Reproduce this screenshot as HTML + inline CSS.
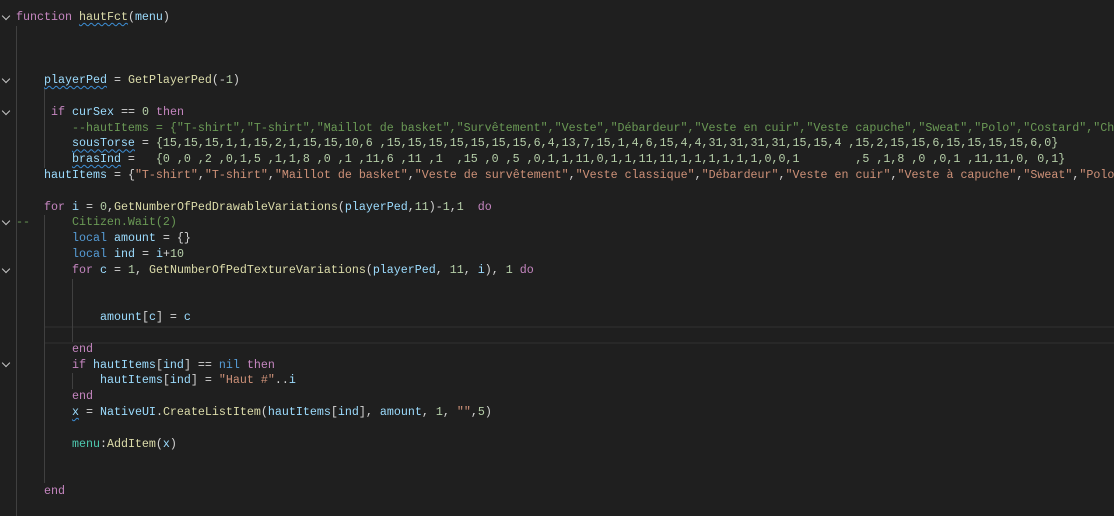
<!DOCTYPE html>
<html><head><meta charset="utf-8"><style>
body{margin:0;width:1114px;height:514px;background:#1f1f1f;overflow:hidden;position:relative;font-family:"Liberation Mono",monospace;font-size:11.67px;color:#d4d4d4}
#w{position:absolute;left:0;top:2px;width:1114px;height:514px}
.l{position:absolute;left:16px;height:15.8px;line-height:15.8px;white-space:pre;}
.k{color:#c586c0}.f{color:#dcdcaa}.v{color:#9cdcfe}.n{color:#b5cea8}.s{color:#ce9178}.c{color:#6a9955}.b{color:#569cd6}.t{color:#4ec9b0}
.w{text-decoration:underline wavy #3d8fd6;text-decoration-thickness:1px;text-underline-offset:2px}
.g{position:absolute;width:1px;background:#404040}
.ch{position:absolute;left:3px;width:5px;height:5px;border-right:1px solid #c5c5c5;border-bottom:1px solid #c5c5c5;transform:rotate(45deg)}
.cur{position:absolute;left:44px;right:0;height:14px;border-top:2px solid #282828;border-bottom:2px solid #282828}
</style></head><body><div id="w">
<div class="cur" style="top:324px"></div>
<div class="g" style="left:16px;top:24px;height:490px"></div>
<div class="g" style="left:44px;top:87px;height:79px"></div>
<div class="g" style="left:44px;top:213px;height:268px"></div>
<div class="g" style="left:72px;top:277px;height:63px"></div>
<div class="g" style="left:72px;top:371px;height:16px"></div>

<div class="ch" style="top:11px"></div>
<div class="ch" style="top:74px"></div>
<div class="ch" style="top:106px"></div>
<div class="ch" style="top:216px"></div>
<div class="ch" style="top:264px"></div>
<div class="ch" style="top:358px"></div>

<div class="l" style="top:8px"><span class="k">function</span> <span class="f w">hautFct</span>(<span class="v">menu</span>)</div>
<div class="l" style="top:71.2px">    <span class="v w">playerPed</span> = <span class="f">GetPlayerPed</span>(-<span class="n">1</span>)</div>
<div class="l" style="top:102.8px">     <span class="k">if</span> <span class="v">curSex</span> == <span class="n">0</span> <span class="k">then</span></div>
<div class="l c" style="top:118.6px">        --hautItems = {"T-shirt","T-shirt","Maillot de basket","Survêtement","Veste","Débardeur","Veste en cuir","Veste capuche","Sweat","Polo","Costard","Chemise"}</div>
<div class="l n" style="top:134.4px">        <span class="v w">sousTorse</span><span style="color:#d4d4d4"> = </span>{15,15,15,1,1,15,2,1,15,15,10,6 ,15,15,15,15,15,15,15,6,4,13,7,15,1,4,6,15,4,4,31,31,31,31,15,15,4 ,15,2,15,15,6,15,15,15,15,6,0}</div>
<div class="l n" style="top:150.2px">        <span class="v w">brasInd</span><span style="color:#d4d4d4"> =   </span>{0 ,0 ,2 ,0,1,5 ,1,1,8 ,0 ,1 ,11,6 ,11 ,1  ,15 ,0 ,5 ,0,1,1,11,0,1,1,11,11,1,1,1,1,1,1,0,0,1        ,5 ,1,8 ,0 ,0,1 ,11,11,0, 0,1}</div>
<div class="l" style="top:166px">    <span class="v">hautItems</span> = {<span class="s">"T-shirt"</span>,<span class="s">"T-shirt"</span>,<span class="s">"Maillot de basket"</span>,<span class="s">"Veste de survêtement"</span>,<span class="s">"Veste classique"</span>,<span class="s">"Débardeur"</span>,<span class="s">"Veste en cuir"</span>,<span class="s">"Veste à capuche"</span>,<span class="s">"Sweat"</span>,<span class="s">"Polo"</span>}</div>
<div class="l" style="top:197.6px">    <span class="k">for</span> <span class="v">i</span> = <span class="n">0</span>,<span class="f">GetNumberOfPedDrawableVariations</span>(<span class="v">playerPed</span>,<span class="n">11</span>)-<span class="n">1</span>,<span class="n">1</span>  <span class="k">do</span></div>
<div class="l c" style="top:213.4px">--      Citizen.Wait(2)</div>
<div class="l" style="top:229.2px">        <span class="b">local</span> <span class="v">amount</span> = {}</div>
<div class="l" style="top:245px">        <span class="b">local</span> <span class="v">ind</span> = <span class="v">i</span>+<span class="n">10</span></div>
<div class="l" style="top:260.8px">        <span class="k">for</span> <span class="v">c</span> = <span class="n">1</span>, <span class="f">GetNumberOfPedTextureVariations</span>(<span class="v">playerPed</span>, <span class="n">11</span>, <span class="v">i</span>), <span class="n">1</span> <span class="k">do</span></div>
<div class="l" style="top:308.2px">            <span class="v">amount</span>[<span class="v">c</span>] = <span class="v">c</span></div>
<div class="l" style="top:339.8px">        <span class="k">end</span></div>
<div class="l" style="top:355.6px">        <span class="k">if</span> <span class="v">hautItems</span>[<span class="v">ind</span>] == <span class="b">nil</span> <span class="k">then</span></div>
<div class="l" style="top:371.4px">            <span class="v">hautItems</span>[<span class="v">ind</span>] = <span class="s">"Haut #"</span>..<span class="v">i</span></div>
<div class="l" style="top:387.2px">        <span class="k">end</span></div>
<div class="l" style="top:403px">        <span class="v w">x</span> = <span class="v">NativeUI</span>.<span class="f">CreateListItem</span>(<span class="v">hautItems</span>[<span class="v">ind</span>], <span class="v">amount</span>, <span class="n">1</span>, <span class="s">""</span>,<span class="n">5</span>)</div>
<div class="l" style="top:434.6px">        <span class="t">menu</span>:<span class="f">AddItem</span>(<span class="v">x</span>)</div>
<div class="l" style="top:482px">    <span class="k">end</span></div>
</div></body></html>
